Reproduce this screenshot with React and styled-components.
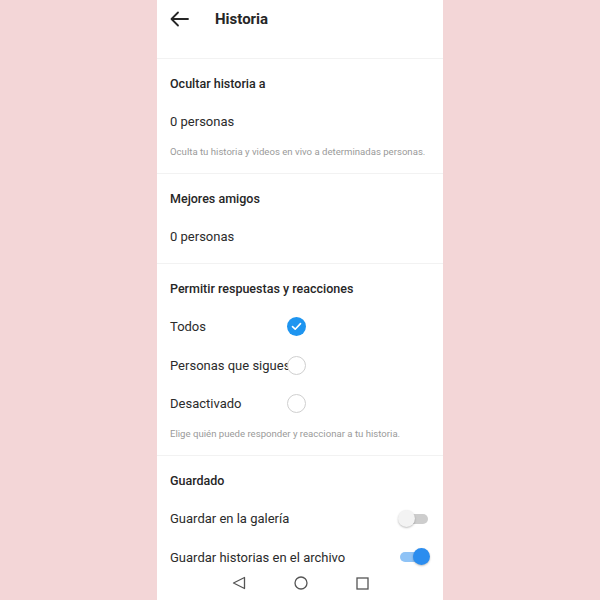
import React from 'react'
import styled, { createGlobalStyle } from 'styled-components'

const GlobalStyle = createGlobalStyle`
  html, body {
    margin: 0;
    padding: 0;
    background: #f3d6d7;
    font-family: Roboto, "Noto Sans", sans-serif;
  }
`

const Phone = styled.div`
  width: 286px;
  height: 100vh;
  margin: 0 auto;
  background: #ffffff;
  display: flex;
  flex-direction: column;
  overflow: hidden;
`

const Content = styled.div`
  flex: 1;
  min-height: 0;
  overflow: hidden;
`

const Header = styled.header`
  height: 38px;
  padding: 0 13px 20px;
  display: flex;
  align-items: center;
  gap: 26px;
  border-bottom: 1px solid #f2f2f2;
`

const Title = styled.h1`
  margin: 0;
  font-size: 15px;
  font-weight: 700;
  color: #262626;
`

const Section = styled.section`
  padding-top: 5px;
  padding-bottom: ${p => (p.$tight ? '7px' : '0')};
  border-bottom: ${p => (p.$last ? 'none' : '1px solid #f2f2f2')};
`

const SectionTitle = styled.div`
  height: 38.5px;
  padding: 0 13px;
  display: flex;
  align-items: center;
  font-size: 12.5px;
  font-weight: 500;
  color: #262626;
`

const Row = styled.div`
  height: 38.5px;
  padding: 0 13px;
  display: flex;
  align-items: center;
  justify-content: ${p => (p.$spread ? 'space-between' : 'flex-start')};
  font-size: 13px;
  color: #2b2b2b;
`

const OptionLabel = styled.span`
  width: 117px;
  white-space: nowrap;
`

const Caption = styled.p`
  margin: 4px 0 0;
  padding: 0 13px 14px;
  line-height: 14px;
  font-size: 9.6px;
  color: #9a9a9a;
`

const Radio = styled.span`
  width: 19px;
  height: 19px;
  box-sizing: border-box;
  border-radius: 50%;
  display: flex;
  align-items: center;
  justify-content: center;
  background: ${p => (p.$checked ? '#1e95f0' : '#ffffff')};
  border: ${p => (p.$checked ? 'none' : '1.5px solid #cfcfcf')};
`

const Toggle = styled.span`
  position: relative;
  width: 32px;
  height: 18px;
  display: inline-block;

  &::before {
    content: '';
    position: absolute;
    left: 2px;
    right: 2px;
    top: 4px;
    height: 10px;
    border-radius: 5px;
    background: ${p => (p.$on ? '#8fc3f6' : '#cdcdcd')};
  }

  &::after {
    content: '';
    position: absolute;
    top: 0;
    left: ${p => (p.$on ? '15px' : '0')};
    width: 17px;
    height: 17px;
    border-radius: 50%;
    background: ${p => (p.$on ? '#2b8def' : '#f3f3f3')};
    box-shadow: 0 1px 2px rgba(0, 0, 0, 0.25);
  }
`

const NavBar = styled.nav`
  height: 30px;
  flex-shrink: 0;
  display: flex;
  align-items: center;
  justify-content: center;
  gap: 48px;
  padding-bottom: 2px;
  background: #ffffff;
`

const BackArrow = () => (
  <svg width="19" height="16" viewBox="0 0 19 16" fill="none" stroke="#262626" strokeWidth="1.8" strokeLinecap="round" strokeLinejoin="round">
    <path d="M18 8H2" />
    <path d="M8 1.5L1.5 8L8 14.5" />
  </svg>
)

const Check = () => (
  <svg width="11" height="9" viewBox="0 0 11 9" fill="none" stroke="#ffffff" strokeWidth="1.6" strokeLinecap="round" strokeLinejoin="round">
    <path d="M1.5 4.6L4.2 7.2L9.5 1.6" />
  </svg>
)

const NavBack = () => (
  <svg width="14" height="14" viewBox="0 0 14 14" fill="none" stroke="#555" strokeWidth="1.3" strokeLinejoin="round">
    <path d="M12.5 1.5V12.5L1.5 7Z" />
  </svg>
)

const NavHome = () => (
  <svg width="14" height="14" viewBox="0 0 14 14" fill="none" stroke="#555" strokeWidth="1.3">
    <circle cx="7" cy="7" r="6" />
  </svg>
)

const NavRecent = () => (
  <svg width="13" height="13" viewBox="0 0 13 13" fill="none" stroke="#555" strokeWidth="1.3">
    <rect x="1" y="1" width="11" height="11" />
  </svg>
)

const options = [
  { label: 'Todos', checked: true },
  { label: 'Personas que sigues', checked: false },
  { label: 'Desactivado', checked: false },
]

const App = () => {
  return (
    <>
      <GlobalStyle />
      <Phone>
        <Content>
          <Header>
            <BackArrow />
            <Title>Historia</Title>
          </Header>

          <Section>
            <SectionTitle>Ocultar historia a</SectionTitle>
            <Row>0 personas</Row>
            <Caption>Oculta tu historia y videos en vivo a determinadas personas.</Caption>
          </Section>

          <Section $tight>
            <SectionTitle>Mejores amigos</SectionTitle>
            <Row>0 personas</Row>
          </Section>

          <Section>
            <SectionTitle>Permitir respuestas y reacciones</SectionTitle>
            {options.map(o => (
              <Row key={o.label}>
                <OptionLabel>{o.label}</OptionLabel>
                <Radio $checked={o.checked}>{o.checked && <Check />}</Radio>
              </Row>
            ))}
            <Caption>Elige quién puede responder y reaccionar a tu historia.</Caption>
          </Section>

          <Section $last>
            <SectionTitle>Guardado</SectionTitle>
            <Row $spread>
              Guardar en la galería
              <Toggle />
            </Row>
            <Row $spread>
              Guardar historias en el archivo
              <Toggle $on />
            </Row>
          </Section>
        </Content>

        <NavBar>
          <NavBack />
          <NavHome />
          <NavRecent />
        </NavBar>
      </Phone>
    </>
  )
}

export default App
